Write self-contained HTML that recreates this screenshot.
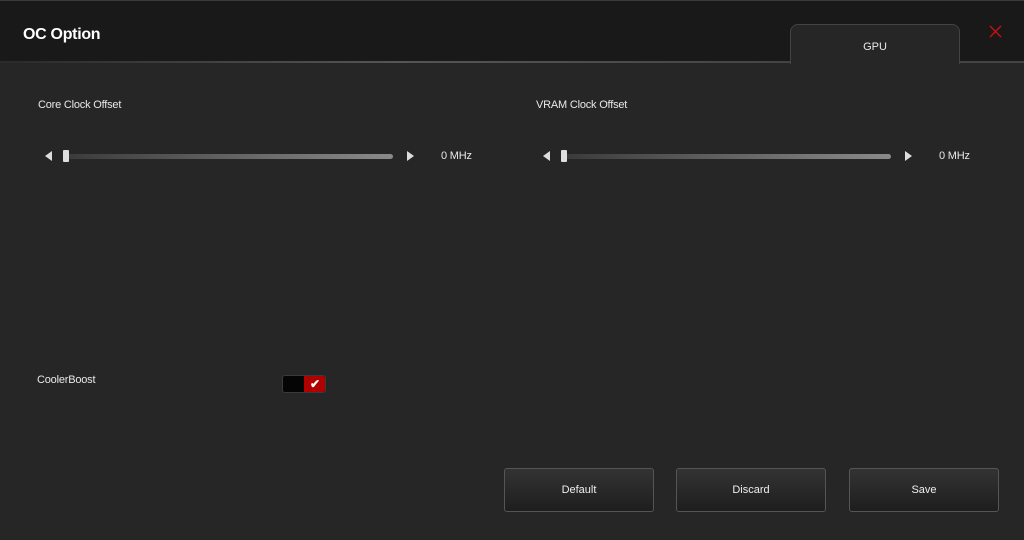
<!DOCTYPE html>
<html><head><style>
body{margin:0;width:1024px;height:540px;background:#262626;font-family:"Liberation Sans",sans-serif;color:#e8e8e8;position:relative;overflow:hidden}
.hdr{position:absolute;left:0;top:0;width:1024px;height:62px;background:#191919;border-top:1px solid #3a3a3a;box-sizing:border-box}
.hline{position:absolute;left:0;top:61px;width:790px;height:2px;background:linear-gradient(90deg,#2a2a2a,#555 50%,#444)}
.hline2{position:absolute;left:960px;top:61px;width:64px;height:2px;background:#444}
.title{position:absolute;left:23px;top:26px;font-size:16px;font-weight:bold;color:#fff;letter-spacing:-0.3px}
.tab{position:absolute;left:790px;top:24px;width:170px;height:40px;background:#262626;border:1px solid #444;border-bottom:none;border-radius:8px 8px 0 0;box-sizing:border-box;text-align:center;line-height:44px;font-size:11px}
.lbl{position:absolute;font-size:11px;letter-spacing:-0.2px}
.track{position:absolute;height:5px;border-radius:3px;background:linear-gradient(90deg,#3a3a3a,#8a8a8a)}
.thumb{position:absolute;width:6px;height:12px;background:#e0e0e0;border-radius:1px}
.al{position:absolute;width:0;height:0;border-top:5px solid transparent;border-bottom:5px solid transparent;border-right:7px solid #ddd}
.ar{position:absolute;width:0;height:0;border-top:5px solid transparent;border-bottom:5px solid transparent;border-left:7px solid #ddd}
.btn{position:absolute;top:468px;width:150px;height:44px;box-sizing:border-box;border:1px solid #555;border-radius:3px;background:linear-gradient(#333,#1e1e1e);text-align:center;line-height:42px;font-size:11px;color:#eee}
</style></head><body>
<div class="hdr"></div><div class="hline"></div><div class="hline2"></div>
<div class="title">OC Option</div>
<div class="tab">GPU</div>
<svg style="position:absolute;left:989px;top:25px" width="13" height="13"><path d="M1 1L12 12M12 1L1 12" stroke="#d01010" stroke-width="1.3"/></svg>
<div class="lbl" style="left:38px;top:99px">Core Clock Offset</div>
<div class="lbl" style="left:536px;top:99px">VRAM Clock Offset</div>
<div class="al" style="left:45px;top:151px"></div>
<div class="track" style="left:64px;top:154px;width:329px"></div>
<div class="thumb" style="left:63px;top:150px"></div>
<div class="ar" style="left:407px;top:151px"></div>
<div class="lbl" style="left:441px;top:150px">0 MHz</div>
<div class="al" style="left:543px;top:151px"></div>
<div class="track" style="left:562px;top:154px;width:329px"></div>
<div class="thumb" style="left:561px;top:150px"></div>
<div class="ar" style="left:905px;top:151px"></div>
<div class="lbl" style="left:939px;top:150px">0 MHz</div>
<div class="lbl" style="left:37px;top:374px">CoolerBoost</div>
<div style="position:absolute;left:282px;top:375px;width:44px;height:18px;border:1px solid #3a3a3a;box-sizing:border-box;border-radius:3px;background:#050505;overflow:hidden">
<div style="position:absolute;left:21px;top:0;width:22px;height:18px;background:#b00000;color:#fff;font-size:12px;text-align:center;line-height:16px;font-weight:bold">✔</div></div>
<div class="btn" style="left:504px">Default</div>
<div class="btn" style="left:676px">Discard</div>
<div class="btn" style="left:849px">Save</div>
</body></html>
